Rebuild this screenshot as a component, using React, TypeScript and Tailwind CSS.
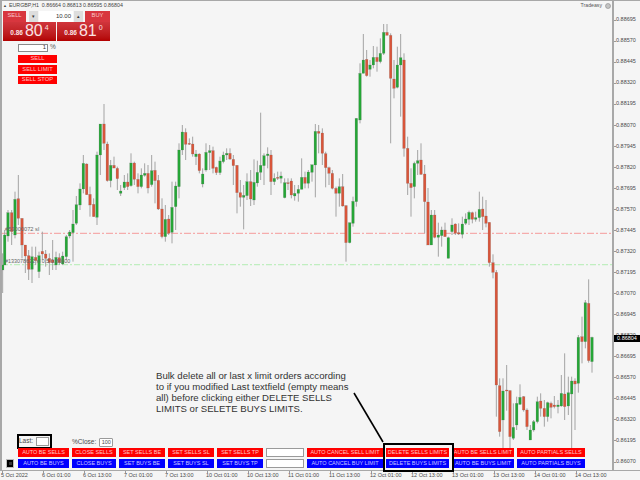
type Candle = [number, number, number, number, number, string];

const GREEN = '#25a636';
const RED = '#d8553a';

// x, high, low, body top, body bottom, colour. Numbers read off 3x crops, so each
// group is mapped back to page pixels below
const left: Candle[] = [
  [8, 430, 549, 465, 480, 'g'], [14, 360, 440, 375, 465, 'g'], [24, 300, 395, 308, 378, 'g'],
  [35, 300, 405, 308, 365, 'r'], [45, 245, 385, 268, 375, 'g'], [55, 195, 345, 266, 325, 'r'],
  [66, 325, 445, 325, 405, 'r'], [76, 405, 489, 405, 438, 'r'], [86, 420, 510, 437, 478, 'r'],
  [96, 410, 519, 440, 478, 'g'], [107, 410, 465, 442, 452, 'r'], [117, 425, 504, 437, 485, 'g'],
  [127, 365, 450, 424, 432, 'r'], [137, 420, 470, 432, 445, 'r'], [148, 430, 495, 445, 458, 'r'],
  [158, 390, 480, 450, 458, 'r'], [168, 425, 480, 442, 465, 'g'], [178, 430, 465, 443, 458, 'r'],
  [188, 425, 465, 438, 462, 'g'], [199, 375, 450, 380, 440, 'g'], [209, 360, 385, 366, 378, 'g'],
  [219, 300, 455, 342, 368, 'g'], [229, 258, 345, 284, 340, 'g'], [240, 220, 300, 237, 285, 'g'],
  [250, 135, 250, 160, 237, 'g'], [260, 160, 255, 162, 254, 'r'], [270, 230, 320, 253, 285, 'r'],
  [281, 265, 320, 283, 320, 'r'], [291, 125, 345, 135, 322, 'g'], [301, 42, 195, 42, 135, 'g'],
  [312, -18, 120, 42, 100, 'r'], [322, 95, 215, 102, 212, 'r'], [332, 150, 232, 166, 212, 'g'],
  [342, 140, 175, 166, 174, 'r'], [352, 170, 240, 175, 206, 'r'], [362, 225, 258, 243, 250, 'g'],
  [373, 195, 240, 216, 233, 'g'], [383, 190, 240, 216, 230, 'r'], [393, 130, 230, 159, 227, 'g'],
  [403, 155, 225, 159, 208, 'r'], [414, 190, 250, 208, 230, 'r'], [424, 175, 235, 195, 230, 'g'],
  [434, 160, 200, 190, 196, 'g'], [444, 165, 250, 190, 234, 'r'], [455, 135, 230, 182, 224, 'g'],
  [465, 155, 280, 181, 212, 'r'], [475, 195, 300, 211, 297, 'r'], [486, 265, 385, 297, 380, 'r'],
  [496, 285, 395, 328, 380, 'g'], [506, 315, 375, 327, 370, 'r'], [516, 215, 400, 292, 367, 'g'],
  [527, 215, 360, 228, 290, 'g'], [537, 100, 265, 120, 230, 'g'], [547, 45, 135, 66, 120, 'g'],
  [557, 55, 150, 67, 103, 'r'], [568, 85, 105, 100, 103, 'r'], [578, 80, 140, 102, 132, 'r'],
  [588, 120, 165, 132, 140, 'g'], [598, 130, 190, 132, 182, 'r'],
];

const mid: Candle[] = [
  [8, 175, 232, 192, 222, 'g'], [18, 100, 185, 127, 180, 'g'], [29, 105, 180, 122, 128, 'g'],
  [39, 110, 190, 122, 175, 'r'], [49, 170, 195, 172, 188, 'r'], [60, 140, 195, 153, 188, 'g'],
  [70, 125, 160, 135, 155, 'g'], [80, 115, 150, 130, 135, 'g'], [90, 115, 150, 130, 147, 'r'],
  [100, 135, 225, 148, 167, 'r'], [111, 165, 310, 166, 248, 'r'], [121, 210, 290, 248, 262, 'r'],
  [131, 225, 358, 256, 262, 'g'], [141, 190, 270, 215, 257, 'g'], [152, 180, 288, 215, 267, 'r'],
  [162, 148, 285, 217, 270, 'g'], [172, 152, 230, 187, 219, 'g'], [182, 8, 210, 166, 187, 'g'],
  [192, 130, 225, 137, 167, 'g'], [203, 112, 175, 132, 137, 'g'], [213, 120, 255, 135, 215, 'r'],
  [223, 190, 225, 205, 215, 'g'], [233, 185, 210, 202, 205, 'r'], [243, 185, 220, 198, 205, 'g'],
  [254, 205, 265, 218, 263, 'g'], [264, 205, 240, 218, 220, 'r'], [274, 205, 265, 213, 255, 'r'],
  [284, 225, 272, 250, 258, 'g'], [295, 225, 275, 238, 250, 'g'], [305, 145, 238, 202, 238, 'g'],
  [315, 185, 235, 202, 220, 'r'], [325, 180, 235, 186, 220, 'g'], [336, 165, 215, 164, 187, 'g'],
  [346, 42, 262, 64, 165, 'g'], [356, 45, 130, 64, 70, 'r'], [367, 55, 165, 69, 130, 'r'],
  [377, 125, 232, 131, 173, 'r'], [387, 170, 225, 173, 190, 'r'], [397, 180, 238, 190, 235, 'r'],
  [408, 230, 320, 235, 250, 'r'], [418, 205, 290, 230, 250, 'g'], [428, 192, 290, 230, 288, 'r'],
  [438, 285, 455, 287, 398, 'r'], [449, 338, 400, 338, 398, 'g'], [459, 260, 350, 274, 340, 'g'],
  [469, 25, 290, 25, 275, 'g'],
];

const peak: Candle[] = [
  [60, 160, 340, 190, 330, 'g'], [70, 72, 190, 150, 190, 'g'], [80, 120, 200, 148, 197, 'r'],
  [90, 150, 200, 165, 178, 'g'], [100, 108, 175, 142, 165, 'g'], [111, 110, 185, 142, 155, 'r'],
  [121, 85, 160, 130, 155, 'g'], [131, 42, 135, 67, 130, 'g'], [141, 42, 76, 67, 76, 'r'],
  [152, 70, 400, 76, 205, 'r'], [162, 150, 265, 207, 235, 'r'], [172, 110, 235, 165, 232, 'g'],
  [182, 72, 320, 143, 165, 'g'], [192, 130, 440, 150, 415, 'r'], [203, 380, 555, 415, 520, 'r'],
  [213, 475, 620, 520, 533, 'r'], [223, 455, 565, 460, 530, 'g'], [233, 420, 495, 452, 460, 'g'],
  [243, 400, 495, 450, 493, 'r'], [254, 465, 670, 492, 575, 'r'],
];

const drop: Candle[] = [
  [24, -6, 165, 36, 165, 'r'], [34, 60, 165, 75, 165, 'g'], [44, 60, 145, 75, 142, 'r'],
  [55, 98, 200, 135, 142, 'g'], [65, 110, 170, 120, 137, 'g'], [75, 98, 140, 120, 140, 'r'],
  [85, 140, 205, 143, 205, 'g'], [96, 85, 135, 105, 125, 'g'], [106, 100, 135, 102, 130, 'r'],
  [116, 100, 135, 128, 132, 'r'], [127, 80, 145, 102, 133, 'g'], [137, 70, 105, 87, 100, 'g'],
  [147, 62, 105, 67, 88, 'g'], [157, 65, 100, 68, 88, 'r'], [167, 65, 95, 83, 88, 'g'],
  [178, 5, 95, 58, 83, 'g'], [188, 20, 120, 57, 80, 'r'], [198, 30, 112, 78, 100, 'r'],
  [208, 97, 230, 97, 218, 'r'], [219, 193, 265, 218, 247, 'r'], [229, 240, 680, 247, 585, 'r'],
  [239, 565, 740, 587, 725, 'r'], [249, 565, 780, 603, 690, 'g'], [260, 525, 662, 600, 603, 'r'],
  [270, 600, 780, 602, 740, 'r'], [280, 640, 750, 712, 745, 'g'], [290, 620, 720, 640, 705, 'g'],
  [300, 583, 645, 622, 643, 'g'], [311, 618, 665, 620, 660, 'r'], [321, 655, 720, 660, 710, 'r'],
];

const tail: Candle[] = [
  [1, 465, 510, 480, 510, 'g'], [11, 450, 485, 455, 480, 'g'], [22, 380, 460, 395, 455, 'g'],
  [32, 370, 440, 393, 415, 'r'], [43, 390, 470, 415, 440, 'r'], [53, 395, 455, 398, 440, 'g'],
  [63, 395, 445, 400, 412, 'r'], [73, 378, 415, 405, 410, 'r'], [84, 390, 430, 405, 410, 'g'],
  [94, 315, 410, 370, 408, 'g'], [104, 250, 450, 372, 410, 'r'], [115, 320, 435, 368, 408, 'g'],
  [125, 320, 540, 333, 372, 'g'], [135, 325, 480, 333, 342, 'r'], [145, 195, 368, 202, 340, 'g'],
  [156, 140, 280, 200, 215, 'r'], [166, 90, 235, 98, 215, 'g'], [176, 28, 278, 100, 272, 'r'],
  [186, 200, 308, 202, 275, 'g'],
];

const place = (list: Candle[], ox: number, oy: number): Candle[] =>
  list.map(([x, h, l, t, b, c]) => [ox + x / 3, oy + h / 3, oy + l / 3, oy + t / 3, oy + b / 3, c]);

const candles = [
  ...place(left, 0, 110),
  ...place(mid, 200, 110),
  ...place(peak, 340, 10),
  ...place(drop, 420, 190),
  ...place(tail, 530, 270),
];

const prices = [
  '0.88695', '0.88570', '0.88445', '0.88320', '0.88195', '0.88070', '0.87945', '0.87820',
  '0.87695', '0.87570', '0.87445', '0.87320', '0.87195', '0.87070', '0.86945', '0.86820',
  '0.86695', '0.86570', '0.86445', '0.86320', '0.86195', '0.86070',
];

const times = [
  '5 Oct 2022', '6 Oct 01:00', '6 Oct 13:00', '7 Oct 01:00', '7 Oct 13:00', '10 Oct 01:00',
  '10 Oct 13:00', '11 Oct 01:00', '11 Oct 13:00', '12 Oct 01:00', '12 Oct 13:00',
  '13 Oct 01:00', '13 Oct 13:00', '14 Oct 01:00', '14 Oct 13:00',
];

function Chart() {
  return (
    <svg viewBox="2 1 610 469" className="block h-full w-full">
      <line x1="2" x2="612" y1="233.3" y2="233.3" stroke="#f59a9a" strokeWidth="1" strokeDasharray="7 2 2 2" />
      <line x1="2" x2="612" y1="264.7" y2="264.7" stroke="#c0eec0" strokeWidth="1.2" strokeDasharray="6 2 2 2" />
      {candles.map(([x, h, l, t, b, c], i) => (
        <g key={i}>
          <line x1={x} x2={x} y1={h} y2={l} stroke="#a3a3a3" strokeWidth="1" />
          <rect
            x={x - 1.3}
            y={t}
            width="2.6"
            height={Math.max(+b - +t, 1)}
            fill={c === 'g' ? GREEN : RED}
            stroke="#6b6b6b"
            strokeOpacity="0.45"
            strokeWidth="0.4"
          />
        </g>
      ))}
    </svg>
  );
}

function QuotePanel({ big, tiny }: { big: string; tiny: string }) {
  return (
    <div className="flex h-[19px] flex-1 items-center justify-center bg-gradient-to-b from-[#d0353c] to-[#b30000] text-[#fbe3e3]">
      <span className="mt-[5px] text-[6.5px] font-bold">0.86</span>
      <span className="ml-[2px] text-[16px] leading-none">{big}</span>
      <span className="mb-[8px] ml-[2px] text-[7px] leading-none">{tiny}</span>
    </div>
  );
}

function TradePanel() {
  return (
    <div className="absolute left-[1px] top-[9.5px] w-[107px] text-[5.8px] leading-none">
      <div className="flex h-[11px] items-stretch gap-[1px]">
        <div className="flex w-[23px] items-center justify-center bg-[#d8363e] text-[#f8c8c8]">SELL</div>
        <div className="ml-[2px] flex w-[9px] items-center justify-center bg-[#dddddd] text-[5px] text-[#333333]">▾</div>
        <div className="flex w-[34px] items-center justify-end bg-white pr-[2px] text-[6px] text-[#333333]">10.00</div>
        <div className="flex w-[9px] items-center justify-center bg-[#dddddd] text-[5px] text-[#333333]">▴</div>
        <div className="ml-[1px] flex flex-1 items-center justify-center bg-[#d8363e] text-[#f8c8c8]">BUY</div>
      </div>
      <div className="flex gap-[1px]">
        <QuotePanel big="80" tiny="4" />
        <QuotePanel big="81" tiny="0" />
      </div>
      <div className="ml-[15px] mt-[3px] flex items-center gap-[2px]">
        <div className="h-[8px] w-[30px] border border-[#8a8a8a] bg-white pr-[1px] text-right text-[#333333]">1</div>
        <span className="text-[6.5px] text-[#555555]">%</span>
      </div>
      <div className="ml-[15px] mt-[3px] flex w-[39px] flex-col gap-[2.2px] text-[#ffc0c0]">
        <div className="flex h-[8.5px] items-center justify-center bg-[#ff0000]">SELL</div>
        <div className="flex h-[8.5px] items-center justify-center bg-[#ff0000]">SELL LIMIT</div>
        <div className="flex h-[8.5px] items-center justify-center bg-[#ff0000]">SELL STOP</div>
      </div>
    </div>
  );
}

function OrderButton({ label, w, red }: { label: string; w: string; red?: boolean }) {
  return (
    <div className={`flex h-[9px] items-center justify-center whitespace-nowrap ${w} ${red ? 'bg-[#ff0000] text-[#ffc8c8]' : 'bg-[#0000ff] text-[#c8c8ff]'}`}>
      {label}
    </div>
  );
}

function Field({ w }: { w: string }) {
  return <div className={`h-[9px] border border-[#9a9a9a] bg-white ${w}`} />;
}

function OrderButtons() {
  return (
    <div className="absolute left-[16px] top-[447px] flex flex-col gap-[2px] text-[5.5px] leading-none">
      <div className="flex gap-[3px]">
        <OrderButton red label="AUTO BE SELLS" w="w-[51px]" />
        <OrderButton red label="CLOSE SELLS" w="w-[44px]" />
        <OrderButton red label="SET SELLS BE" w="w-[46px]" />
        <OrderButton red label="SET SELLS SL" w="w-[46px]" />
        <OrderButton red label="SET SELLS TP" w="w-[46px]" />
        <Field w="w-[38px]" />
        <OrderButton red label="AUTO CANCEL SELL LIMIT" w="w-[76px]" />
        <OrderButton red label="DELETE SELLS LIMITS" w="w-[63px]" />
        <OrderButton red label="AUTO BE SELLS LIMIT" w="w-[62px]" />
        <OrderButton red label="AUTO PARTIALS SELLS" w="w-[68px]" />
      </div>
      <div className="flex gap-[3px]">
        <OrderButton label="AUTO BE BUYS" w="w-[51px]" />
        <OrderButton label="CLOSE BUYS" w="w-[44px]" />
        <OrderButton label="SET BUYS BE" w="w-[46px]" />
        <OrderButton label="SET BUYS SL" w="w-[46px]" />
        <OrderButton label="SET BUYS TP" w="w-[46px]" />
        <Field w="w-[38px]" />
        <OrderButton label="AUTO CANCEL BUY LIMIT" w="w-[76px]" />
        <OrderButton label="DELETE BUYS LIMITS" w="w-[63px]" />
        <OrderButton label="AUTO BE BUYS LIMIT" w="w-[62px]" />
        <OrderButton label="AUTO PARTIALS BUYS" w="w-[68px]" />
      </div>
    </div>
  );
}

export default function App() {
  return (
    <div className="flex h-[480px] w-[640px] flex-col overflow-hidden bg-[#f5f5f5] font-['Liberation_Sans',sans-serif] text-[5.5px] leading-none text-[#4a4a4a]">
      <div className="flex h-[470px] border-t border-[#a8a8a8]">
        <div className="relative w-[614px] shrink-0 border-l-2 border-r-2 border-[#a8a8a8]">
          <Chart />

          {/* header */}
          <div className="absolute left-[1px] top-[2px] flex items-center gap-[2px] whitespace-nowrap text-[5.3px] text-[#444444]">
            <span className="text-[4px]">▲</span>
            <span>EURGBP,H1&nbsp; 0.86664 0.86813 0.86595 0.86804</span>
          </div>
          <div className="absolute right-[1px] top-[2px] flex items-center gap-[3px] text-[5.2px] text-[#555555]">
            <span>Tradeasy</span>
            <svg width="6" height="6" viewBox="0 0 6 6">
              <circle cx="3" cy="3" r="2.5" fill="#c4c4c4" stroke="#8a8a8a" strokeWidth="0.6" />
            </svg>
          </div>

          <TradePanel />

          {/* order labels on the level lines */}
          <div className="absolute left-[3px] top-[226px] text-[5.7px] text-[#666666]">#53000072 sl</div>
          <div className="absolute left-[3px] top-[257.5px] text-[5.4px] text-[#666666]">#133078622 sl 0.5 0.86600</div>

          {/* callout */}
          <div className="absolute left-[154px] top-[369px] whitespace-nowrap text-[9.6px] leading-[11px] text-[#333333]">
            Bulk delete all or last x limit orders according
            <br />
            to if you modified Last textfield (empty means
            <br />
            all) before clicking either DELETE SELLS
            <br />
            LIMITS or SELETE BUYS LIMITS.
          </div>
          <svg className="absolute left-[350px] top-[390px]" width="36" height="54" viewBox="0 0 36 54">
            <line x1="2" y1="2" x2="31" y2="51" stroke="#000000" strokeWidth="1.6" />
          </svg>

          {/* Last / %Close */}
          <div className="absolute left-[15px] top-[433px] flex h-[15px] w-[35px] items-center gap-[3px] border-2 border-black text-[6.5px]">
            <span>Last:</span>
            <div className="h-[9px] w-[13px] border border-[#9a9a9a] bg-white" />
          </div>
          <div className="absolute left-[70px] top-[437px] flex items-center gap-[3px] text-[6.5px]">
            <span>%Close:</span>
            <div className="flex h-[9px] w-[14px] items-center justify-center rounded-[1px] border border-[#9a9a9a] bg-white text-[5.5px]">100</div>
          </div>
          <div className="absolute left-[4px] top-[458px] flex h-[9px] w-[8px] items-center justify-center border border-[#bdbdbd] bg-black">
            <div className="h-[3px] w-[3px] bg-[#333333]" />
          </div>

          <OrderButtons />
          <div className="absolute left-[381px] top-[441.5px] h-[29.5px] w-[70.5px] border-[2.5px] border-black" />
        </div>

        {/* price axis */}
        <div className="relative flex-1 pt-[8.5px]">
          {prices.map((p) => (
            <div key={p} className="flex h-[21.05px] items-center">
              <div className="h-px w-[2px] bg-[#9a9a9a]" />
              <span className="whitespace-nowrap">{p}</span>
            </div>
          ))}
          <div className="absolute left-0 top-[334px] flex h-[7px] w-[26px] items-center justify-center bg-black text-white">0.86804</div>
        </div>
      </div>

      {/* time axis */}
      <div className="flex h-[10px] border-t border-[#a8a8a8]">
        {times.map((t) => (
          <div key={t} className="w-[41px] shrink-0 pl-[1px]">
            <div className="ml-[1px] h-[2px] w-px bg-[#9a9a9a]" />
            <div className="whitespace-nowrap">{t}</div>
          </div>
        ))}
      </div>
    </div>
  );
}
